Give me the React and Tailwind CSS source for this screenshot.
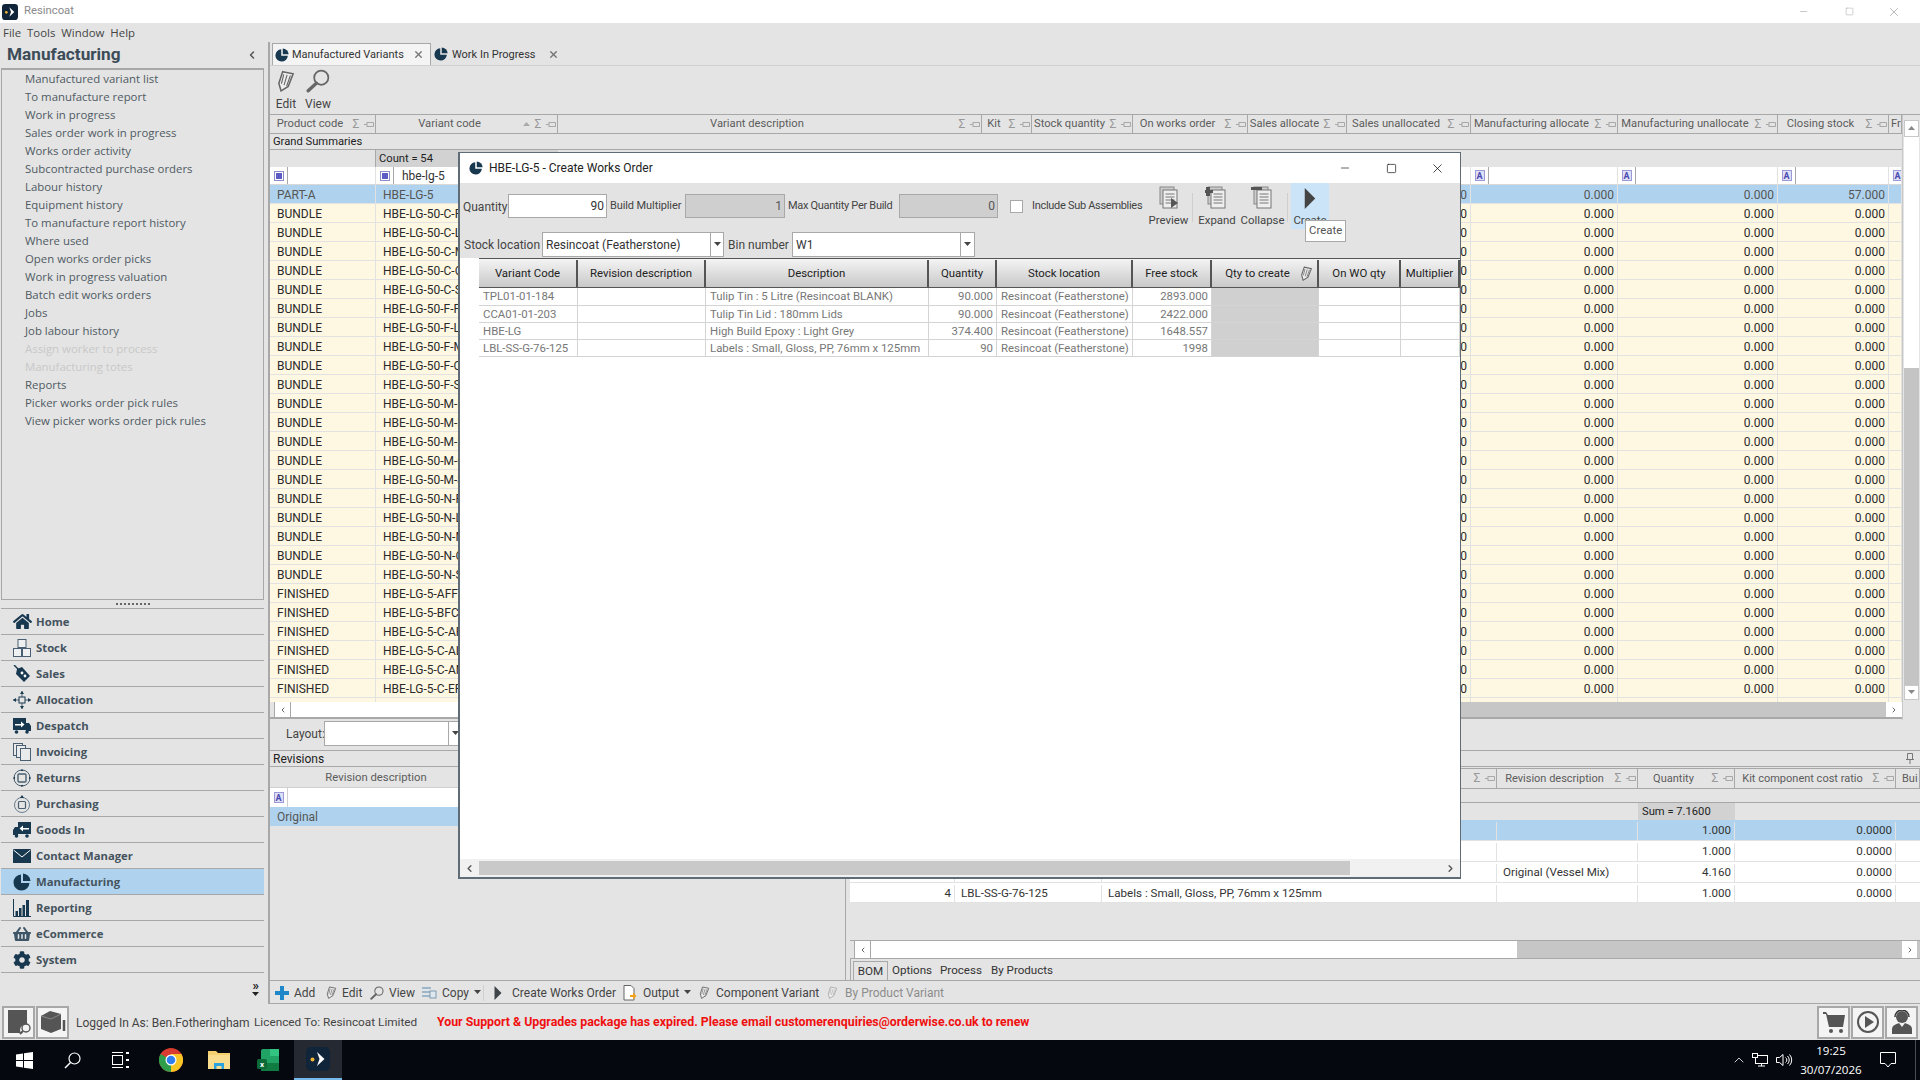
import React from 'react';
import { FaCog, FaShoppingBasket, FaHome } from 'react-icons/fa';
import { ChevronLeft, ChevronRight, ChevronUp, X, Minus, Square } from 'lucide-react';

const NAVY = '#17384f';

const Pie = ({ size = 14 }) => (
  <svg width={size} height={size} viewBox="0 0 18 18" className="shrink-0">
    <path d="M8 1.5 A8 8 0 1 0 16.5 10 L8 10 Z" fill={NAVY} />
    <path d="M10 0.5 A8 8 0 0 1 17.5 8 L10 8 Z" fill={NAVY} />
  </svg>
);

const Pin = () => (
  <svg width="10" height="7" viewBox="0 0 10 7" className="shrink-0">
    <path d="M0 3.5h3M3 1v5M3 1.5h6.5v4H3" fill="none" stroke="#a8a8a8" strokeWidth="1" />
  </svg>
);

const Pencil = ({ size = 16, color = '#666' }) => (
  <svg width={size} height={size} viewBox="0 0 16 20" className="shrink-0">
    <path d="M5 1.5 L14.5 3.5 L10 15 L3.5 19 L1.5 12 Z" fill="#eee" stroke={color} strokeWidth="1.4" />
    <path d="M6 4 L3.8 12.5M9 4.5 L6.2 13.8M12 5 L8.6 14.5" stroke={color} strokeWidth="1" />
  </svg>
);

const Glass = ({ size = 16 }) => (
  <svg width={size} height={size} viewBox="0 0 22 22" className="shrink-0">
    <circle cx="14" cy="8" r="6.5" fill="none" stroke="#666" strokeWidth="1.6" />
    <path d="M9.5 13 L2 20" stroke="#666" strokeWidth="3" strokeLinecap="round" />
  </svg>
);

const Play = ({ w = 8, h = 16, color = '#3f4448' }) => (
  <svg width={w} height={h} viewBox="0 0 8 16" className="shrink-0">
    <path d="M0 0 L8 8 L0 16 Z" fill={color} />
  </svg>
);

const Caret = ({ dir = 'down', color = '#444' }) => (
  <svg width="7" height="5" viewBox="0 0 7 5" className="shrink-0">
    {dir === 'down' ? <path d="M0 0h7L3.5 4z" fill={color} /> : <path d="M0 4h7L3.5 0z" fill={color} />}
  </svg>
);

const FilterA = () => (
  <span className="w-[10px] h-[11px] border border-[#9a9ad8] bg-[#dfe0f5] text-[9px] leading-[10px] text-center text-[#4a4ab0] font-bold shrink-0">A</span>
);

const FilterBox = () => (
  <span className="w-[10px] h-[10px] border border-[#8b8bc9] bg-white flex items-center justify-center shrink-0">
    <span className="w-[6px] h-[6px] bg-[#5c5cc4]" />
  </span>
);

const AppLogo = ({ size = 16 }) => (
  <svg width={size} height={size} viewBox="0 0 24 24" className="shrink-0">
    <rect width="24" height="24" rx="5" fill="#10243a" />
    <circle cx="6.5" cy="12.5" r="2" fill="#f2b632" />
    <path d="M11 5 L18.5 12 L11 19 L13.5 12 Z" fill="#fff" />
  </svg>
);

const navIcon = {
  Home: <FaHome size={19} color={NAVY} />,
  Stock: (
    <svg width="18" height="18" viewBox="0 0 18 18"><g fill="#eef0f2" stroke="#4a6072" strokeWidth="1"><rect x="5" y="0.5" width="8" height="8" /><rect x="0.5" y="9.5" width="8" height="8" /><rect x="9.5" y="9.5" width="8" height="8" /></g></svg>
  ),
  Sales: (
    <svg width="18" height="18" viewBox="0 0 18 18"><path d="M1 0 L6 5" stroke={NAVY} strokeWidth="1.4" /><path d="M4 4 L9 2 L17 11 L11 17 L3 9 Z" fill={NAVY} /><circle cx="9" cy="8" r="1.4" fill="#fff" /><circle cx="12" cy="11" r="1.4" fill="#fff" /></svg>
  ),
  Allocation: (
    <svg width="18" height="18" viewBox="0 0 18 18"><path d="M9 0v18M0 9h18" stroke="#4a6072" strokeWidth="1" /><rect x="6" y="6" width="6" height="6" fill="#e4e4e4" stroke={NAVY} /><path d="M9 0l-2 3h4zM9 18l-2-3h4zM0 9l3-2v4zM18 9l-3-2v4z" fill={NAVY} /></svg>
  ),
  Despatch: (
    <svg width="18" height="18" viewBox="0 0 18 18"><rect x="0" y="1" width="13" height="12" fill={NAVY} /><path d="M13 6h3l2 3v5H13z" fill={NAVY} /><path d="M2 7h6V4.500l3.500 3-3.500 3V8.500H2z" fill="#fff" /><circle cx="3.500" cy="15" r="1.800" fill={NAVY} /><circle cx="14" cy="15" r="1.800" fill={NAVY} /></svg>
  ),
  Invoicing: (
    <svg width="18" height="18" viewBox="0 0 18 18"><g fill="#e8eaec" stroke="#4a6072"><rect x="0.5" y="0.500" width="9" height="12" /><rect x="3.500" y="2.500" width="9" height="12" /><rect x="7.500" y="5.500" width="10" height="12" /></g></svg>
  ),
  Returns: (
    <svg width="18" height="18" viewBox="0 0 18 18"><circle cx="9" cy="9" r="8" fill="none" stroke="#4a6072" /><rect x="5" y="5" width="8" height="8" rx="1" fill="none" stroke="#4a6072" strokeWidth="1.4" /><path d="M9 0l-1.500 2h3zM9 18l-1.500-2h3zM0 9l2-1.500v3zM18 9l-2-1.500v3z" fill={NAVY} /></svg>
  ),
  Purchasing: (
    <svg width="18" height="18" viewBox="0 0 18 18"><circle cx="9" cy="10" r="7.500" fill="none" stroke="#6b7e8d" /><rect x="5.500" y="6.500" width="7" height="7" rx="1" fill="none" stroke="#4a6072" strokeWidth="1.200" /><path d="M9 0l-2 3h4z" fill={NAVY} /></svg>
  ),
  'Goods In': (
    <svg width="18" height="18" viewBox="0 0 18 18"><rect x="5" y="1" width="13" height="12" fill={NAVY} /><path d="M5 6H2L0 9v5h5z" fill={NAVY} /><path d="M16 7h-6V4.500L6.500 7.500l3.500 3V8.500h6z" fill="#fff" /><circle cx="3.500" cy="15" r="1.800" fill={NAVY} /><circle cx="14" cy="15" r="1.800" fill={NAVY} /></svg>
  ),
  'Contact Manager': (
    <svg width="18" height="14" viewBox="0 0 18 14"><rect width="18" height="14" fill={NAVY} /><path d="M0.500 1 L9 8 L17.500 1" fill="none" stroke="#fff" strokeWidth="1" /></svg>
  ),
  Manufacturing: <Pie size={18} />,
  Reporting: (
    <svg width="18" height="18" viewBox="0 0 18 18"><path d="M0.500 0v17.500H18" fill="none" stroke={NAVY} /><g fill={NAVY}><rect x="2.500" y="12" width="2.500" height="5" /><rect x="6" y="9" width="2.500" height="8" /><rect x="9.500" y="6" width="2.500" height="11" /><rect x="13" y="1" width="3" height="16" /></g></svg>
  ),
  eCommerce: <FaShoppingBasket size={18} color="#3e5567" />,
  System: <FaCog size={18} color={NAVY} />,
};

const menuItems = ['Manufactured variant list', 'To manufacture report', 'Work in progress', 'Sales order work in progress', 'Works order activity', 'Subcontracted purchase orders', 'Labour history', 'Equipment history', 'To manufacture report history', 'Where used', 'Open works order picks', 'Work in progress valuation', 'Batch edit works orders', 'Jobs', 'Job labour history', 'Assign worker to process', 'Manufacturing totes', 'Reports', 'Picker works order pick rules', 'View picker works order pick rules'];
const disabledItems = ['Assign worker to process', 'Manufacturing totes'];
const navItems = ['Home', 'Stock', 'Sales', 'Allocation', 'Despatch', 'Invoicing', 'Returns', 'Purchasing', 'Goods In', 'Contact Manager', 'Manufacturing', 'Reporting', 'eCommerce', 'System'];

const columns = [
  { label: 'Product code', w: 'w-[106px]' },
  { label: 'Variant code', w: 'w-[182px]', sorted: true },
  { label: 'Variant description', w: 'w-[424px]' },
  { label: 'Kit', w: 'w-[50px]' },
  { label: 'Stock quantity', w: 'w-[101px]', num: true },
  { label: 'On works order', w: 'w-[115px]', num: true },
  { label: 'Sales allocate', w: 'w-[99px]', num: true },
  { label: 'Sales unallocated', w: 'w-[124px]', num: true },
  { label: 'Manufacturing allocate', w: 'w-[147px]', num: true },
  { label: 'Manufacturing unallocate', w: 'w-[160px]', num: true },
  { label: 'Closing stock', w: 'w-[111px]', num: true },
  { label: 'Fr', w: 'w-[13px]', bare: true },
];

const letters = ['C', 'F', 'M', 'N'];
const ends = ['F', 'L', 'M', 'O', 'S'];
const bundleCodes = letters.flatMap((l) => ends.map((e) => `HBE-LG-50-${l}-${e}`));
const rows = [
  { type: 'PART-A', code: 'HBE-LG-5', closing: '57.000', selected: true },
  ...bundleCodes.map((code) => ({ type: 'BUNDLE', code, closing: '0.000' })),
  ...['AFF', 'BFC', 'C-AF', 'C-AL', 'C-AM', 'C-EF'].map((s) => ({ type: 'FINISHED', code: `HBE-LG-5-${s}`, closing: '0.000' })),
];

const HeaderCell = ({ col }) => (
  <div className={`${col.w} shrink-0 h-full flex items-center border-r border-[#a8a8a8] overflow-hidden`}>
    {col.bare ? (
      <span className="pl-[2px] pt-px">{col.label}</span>
    ) : (
      <>
        <span className="flex-1 pt-px text-center whitespace-nowrap">{col.label}</span>
        {col.sorted && <span className="mr-[2px]"><Caret dir="up" color="#aaa" /></span>}
        <span className="text-[#999] text-[12px] w-[12px] text-center">Σ</span>
        <span className="ml-[2px] mr-px"><Pin /></span>
      </>
    )}
  </div>
);

const GridRow = ({ row }) => (
  <div className={`flex h-[19px] border-b border-[#e2e2e2] ${row.selected ? 'bg-[#afd3ee] text-[#555]' : 'bg-[#fef8e3] text-[#2a2a2a]'}`}>
    {columns.map((col, i) => (
      <div key={col.label} className={`${col.w} shrink-0 border-r border-[#e2e2e2] pt-px flex items-center overflow-hidden whitespace-nowrap ${col.num ? 'justify-end pr-[3px]' : 'pl-[7px]'}`}>
        {i === 0 && row.type}
        {i === 1 && row.code}
        {col.num && (col.label === 'Closing stock' ? row.closing : '0.000')}
      </div>
    ))}
  </div>
);

const TitleBar = () => (
  <div className="h-[23px] bg-white flex items-center">
    <span className="ml-[2px]"><AppLogo /></span>
    <span className="ml-[6px] text-[11.3px] text-[#8a8a8a]">Resincoat</span>
    <div className="ml-auto pr-[3px] flex items-center text-[#888]">
      <span className="w-[48px] flex justify-center"><Minus size={11} strokeWidth={1} /></span>
      <span className="w-[44px] flex justify-center"><Square size={9} strokeWidth={1} /></span>
      <span className="w-[46px] flex justify-center"><X size={14} strokeWidth={1} /></span>
    </div>
  </div>
);

const Sidebar = () => (
  <div className="w-[264px] shrink-0 flex flex-col pl-px">
    <div className="h-[26px] flex items-center pl-[6px] pr-[6px] justify-between">
      <span className="text-[17.2px] font-bold text-[#3c4c58] leading-none">Manufacturing</span>
      <ChevronLeft size={12} strokeWidth={3} color="#555" />
    </div>
    <div className="h-[532px] border-2 border-[#a8a8a8] border-b border-l border-r overflow-hidden">
      {menuItems.map((m) => (
        <div key={m} className={`h-[18px] pl-[23px] flex items-center font-['Open_Sans',sans-serif] text-[11.4px] ${disabledItems.includes(m) ? 'text-[#c8c8c8]' : 'text-[#4f5a63]'}`}>{m}</div>
      ))}
    </div>
    <div className="h-[8px] flex items-center justify-center">
      <span className="w-[34px] border-t-2 border-dotted border-[#666]" />
    </div>
    <div className="border-t border-[#a8a8a8]">
      {navItems.map((n) => (
        <div key={n} className={`h-[26px] flex items-center border-b border-[#a8a8a8] font-['Open_Sans',sans-serif] font-bold text-[11.3px] text-[#45535e] ${n === 'Manufacturing' ? 'bg-[#afd3ee]' : ''}`}>
          <span className="w-[35px] pl-[12px] flex items-center shrink-0">{navIcon[n]}</span>
          <span className="pt-px">{n}</span>
        </div>
      ))}
    </div>
    <div className="flex-1 flex flex-col items-end pr-[5px] pt-[9px]">
      <span className="text-[13px] leading-[8px] font-bold text-[#222]">»</span>
      <span className="mt-[2px]"><Caret color="#222" /></span>
    </div>
  </div>
);

const MainGrid = () => (
  <div className="flex h-[606px] border-t border-[#a8a8a8]">
    <div className="w-[1632px] shrink-0 flex flex-col">
      <div className="flex h-[19px] border-b border-[#a8a8a8] text-[#5c5c5c] text-[11.2px]">
        {columns.map((c) => <HeaderCell key={c.label} col={c} />)}
      </div>
      <div className="h-[16px] border-b border-[#a8a8a8] pl-[3px] pt-[2px] flex items-center text-[#222] text-[11.2px]">Grand Summaries</div>
      <div className="flex h-[17px]">
        <div className="w-[106px] border-r border-[#a8a8a8]" />
        <div className="w-[182px] bg-[#d2d2d2] pl-[3px] pt-px flex items-center text-[#222] text-[11.2px]">Count = 54</div>
      </div>
      <div className="flex h-[18px] bg-white border-b border-[#d8d8d8]">
        {columns.map((col, i) => (
          <div key={col.label} className={`${col.w} shrink-0 flex items-center border-r border-[#e2e2e2] overflow-hidden text-[#333]`}>
            <span className="w-[18px] h-full flex items-center justify-center border-r border-[#a8a8a8] shrink-0">
              {i < 2 ? <FilterBox /> : <FilterA />}
            </span>
            {i === 1 && <span className="pl-[8px]">hbe-lg-5</span>}
          </div>
        ))}
      </div>
      {rows.map((r) => <GridRow key={r.code} row={r} />)}
      <div className="flex h-[4px] bg-[#fef8e3]">
        {columns.map((c) => <div key={c.label} className={`${c.w} shrink-0 border-r border-[#e2e2e2]`} />)}
      </div>
      <div className="h-[17px] flex items-center bg-[#c6c6c6] border-b-2 border-[#a8a8a8]">
        <span className="w-[5px] h-full bg-[#e4e4e4] border-r border-[#a8a8a8]" />
        <span className="w-[16px] h-full bg-white border-r border-[#a8a8a8] flex items-center justify-center"><ChevronLeft size={8} strokeWidth={3} color="#666" /></span>
        <span className="w-[200px] h-full bg-white" />
        <span className="ml-auto w-[16px] h-full bg-white flex items-center justify-center"><ChevronRight size={8} strokeWidth={3} color="#666" /></span>
      </div>
    </div>
    <div className="w-[18px] shrink-0 flex flex-col px-px pt-[5px] bg-[#e4e4e4] border-l border-[#c8c8c8]">
      <div className="h-[17px] bg-white border border-[#c8c8c8] flex items-center justify-center"><Caret dir="up" color="#888" /></div>
      <div className="h-[231px] bg-white" />
      <div className="h-[317px] bg-[#c4c4c4]" />
      <div className="h-[15px] bg-white border border-[#c8c8c8] flex items-center justify-center"><Caret color="#888" /></div>
    </div>
  </div>
);

const bomCols = ['w-[105px]', 'w-[147px]', 'w-[395px]', 'w-[141px]', 'w-[97px]', 'w-[161px]', 'w-[24px]'];
const bomRows = [
  { n: 1, code: 'TPL01-01-184', desc: 'Tulip Tin : 5 Litre (Resincoat BLANK)', rev: '', qty: '1.000', selected: true },
  { n: 2, code: 'CCA01-01-203', desc: 'Tulip Tin Lid : 180mm Lids', rev: '', qty: '1.000' },
  { n: 3, code: 'HBE-LG', desc: 'High Build Epoxy : Light Grey', rev: 'Original (Vessel Mix)', qty: '4.160' },
  { n: 4, code: 'LBL-SS-G-76-125', desc: 'Labels : Small, Gloss, PP, 76mm x 125mm', rev: '', qty: '1.000' },
];

const BomPane = () => (
  <div className="flex-1 flex flex-col ml-[4px] overflow-hidden">
    <div className="flex h-[21px] mt-px border-y border-[#a8a8a8] text-[#5c5c5c] text-[11px]">
      {['', 'Variant code', 'Description', 'Revision description', 'Quantity', 'Kit component cost ratio', 'Bui'].map((label, i) => (
        <div key={i} className={`${bomCols[i]} shrink-0 flex items-center border-r border-[#a8a8a8] overflow-hidden`}>
          <span className={`flex-1 pt-[2px] whitespace-nowrap ${i === 6 ? 'pl-[6px]' : 'text-center'}`}>{label}</span>
          {i > 0 && i < 6 && <span className="text-[#999] text-[12px] w-[12px] text-center">Σ</span>}
          {i > 0 && i < 6 && <span className="ml-[2px] mr-px"><Pin /></span>}
        </div>
      ))}
    </div>
    <div className="h-[14px] border-b border-[#a8a8a8]" />
    <div className="flex h-[17px]">
      <div className="w-[788px]" />
      <div className="w-[97px] bg-[#d2d2d2] pl-[4px] pt-[2px] flex items-center text-[#222] text-[11.2px]">Sum = 7.1600</div>
    </div>
    {bomRows.map((r) => (
      <div key={r.n} className={`flex h-[21px] border-b border-[#e2e2e2] pt-[2px] text-[#333] text-[11.6px] ${r.selected ? 'bg-[#afd3ee]' : 'bg-white'}`}>
        <div className={`${bomCols[0]} shrink-0 flex items-center justify-end pr-[3px] border-r border-[#e2e2e2]`}>{r.n}</div>
        <div className={`${bomCols[1]} shrink-0 flex items-center pl-[6px] border-r border-[#e2e2e2]`}>{r.code}</div>
        <div className={`${bomCols[2]} shrink-0 flex items-center pl-[6px] border-r border-[#e2e2e2]`}>{r.desc}</div>
        <div className={`${bomCols[3]} shrink-0 flex items-center pl-[6px] border-r border-[#e2e2e2]`}>{r.rev}</div>
        <div className={`${bomCols[4]} shrink-0 flex items-center justify-end pr-[3px] border-r border-[#e2e2e2]`}>{r.qty}</div>
        <div className={`${bomCols[5]} shrink-0 flex items-center justify-end pr-[3px] border-r border-[#e2e2e2]`}>0.0000</div>
        <div className={`${bomCols[6]} shrink-0`} />
      </div>
    ))}
    <div className="h-[37px]" />
    <div className="h-[19px] flex bg-[#c6c6c6] border-y border-[#a8a8a8]">
      <span className="w-[5px] bg-[#e4e4e4] border-r border-[#a8a8a8]" />
      <span className="w-[16px] bg-white border-r border-[#a8a8a8] flex items-center justify-center"><ChevronLeft size={8} strokeWidth={3} color="#666" /></span>
      <span className="w-[646px] bg-white" />
      <span className="ml-auto w-[15px] mr-[3px] bg-white flex items-center justify-center"><ChevronRight size={8} strokeWidth={3} color="#666" /></span>
    </div>
    <div className="h-[21px] flex items-end text-[#333] text-[11.6px] border-l border-[#a8a8a8] pl-[2px]">
      <span className="h-[19px] w-[35px] pt-px flex items-center justify-center border border-b-0 border-[#a8a8a8]">BOM</span>
      <span className="ml-[4px] h-[19px] pt-px w-[38px] flex items-center">Options</span>
      <span className="ml-[10px] h-[19px] pt-px w-[41px] flex items-center">Process</span>
      <span className="ml-[10px] h-[19px] pt-px flex items-center">By Products</span>
    </div>
  </div>
);

const BottomToolbar = () => (
  <div className="h-[24px] border-y border-[#a8a8a8] flex items-center pl-[5px] pt-px text-[#444] whitespace-nowrap">
    <svg width="14" height="14" viewBox="0 0 14 14" className="shrink-0"><path d="M5 0h4v5h5v4H9v5H5V9H0V5h5z" fill="#1f88c9" /></svg>
    <span className="ml-[5px] w-[31px]">Add</span>
    <Pencil size={13} />
    <span className="ml-[4px] w-[28px]">Edit</span>
    <Glass size={14} />
    <span className="ml-[5px] w-[33px]">View</span>
    <svg width="15" height="12" viewBox="0 0 15 12" className="shrink-0"><g fill="#9cb6cc"><rect y="0" width="9" height="2" /><rect y="4" width="9" height="2" /><rect y="8" width="9" height="2" /></g><rect x="8" y="4" width="6" height="7" fill="#dfe8ee" stroke="#7e9ab0" /></svg>
    <span className="ml-[5px] w-[32px]">Copy</span>
    <Caret />
    <span className="ml-[2px] h-[16px] border-l border-[#cfcfcf]" />
    <span className="ml-[10px]"><Play w={8} h={14} /></span>
    <span className="ml-[10px] w-[111px]">Create Works Order</span>
    <svg width="14" height="16" viewBox="0 0 14 16" className="shrink-0"><path d="M1 0.500h7l3 3V15H1z" fill="#fff" stroke="#666" /><path d="M7 10h3V7.500l3.500 3.500-3.500 3.500V12H7z" fill="#f2a11d" /></svg>
    <span className="ml-[6px] w-[41px]">Output</span>
    <Caret />
    <span className="ml-[7px]"><Pencil size={13} /></span>
    <span className="ml-[5px] w-[110px]">Component Variant</span>
    <Pencil size={13} color="#aaa" />
    <span className="ml-[6px] text-[#8c8c8c]">By Product Variant</span>
  </div>
);

const MainPane = () => (
  <div className="flex-1 min-w-0 flex flex-col border-l-2 border-[#a8a8a8]">
    <div className="h-[24px] flex items-end pl-[2px] border-b border-[#d0d0d0] whitespace-nowrap text-[11px]">
      <div className="w-[159px] h-[22px] bg-[#f4f4f4] border border-b-0 border-[#a8a8a8] flex items-center pl-[2px] text-[#333]">
        <Pie />
        <span className="ml-[3px] pt-[2px]">Manufactured Variants</span>
        <X size={11} strokeWidth={3} color="#777" className="ml-auto mr-[6px]" />
      </div>
      <div className="h-[22px] flex items-center pl-[3px] text-[#333]">
        <Pie />
        <span className="ml-[4px] w-[90px] pt-[2px]">Work In Progress</span>
        <X size={11} strokeWidth={3} color="#777" className="ml-[6px]" />
      </div>
    </div>
    <div className="h-[48px] flex text-[#444]">
      <div className="w-[32px] flex flex-col items-center pt-[4px]">
        <Pencil size={22} />
        <span className="mt-[3px]">Edit</span>
      </div>
      <div className="w-[28px] ml-[2px] flex flex-col items-center pt-[3px]">
        <Glass size={24} />
        <span className="mt-[2px]">View</span>
      </div>
    </div>
    <MainGrid />
    <div className="h-[27px] flex items-center pl-[16px] text-[#444]">
      <span className="w-[38px]">Layout:</span>
      <span className="w-[125px] h-[25px] bg-white border border-[#a8a8a8]" />
      <span className="w-[14px] h-[25px] bg-white border-r border-y border-[#a8a8a8] flex items-center justify-center"><Caret /></span>
    </div>
    <div className="h-[3px]" />
    <div className="h-[17px] border-y border-[#a8a8a8] pl-[3px] flex items-center justify-between pr-[6px] text-[#222]">
      Revisions
      <svg width="8" height="11" viewBox="0 0 8 11"><path d="M1.500 0.500h5v6h-5zM0 6.500h8M4 6.500V11" fill="none" stroke="#777" /></svg>
    </div>
    <div className="h-[213px] flex">
      <div className="w-[576px] shrink-0 border-r border-[#a8a8a8] mt-px">
        <div className="h-[20px] flex items-center pt-[2px] text-[#5c5c5c] text-[11.3px] border-b border-[#d0d0d0]">
          <span className="w-[212px] text-center">Revision description</span>
        </div>
        <div className="h-[19px] bg-white flex items-center">
          <span className="w-[18px] h-full flex items-center justify-center border-r border-[#d0d0d0]"><FilterA /></span>
        </div>
        <div className="h-[19px] bg-[#afd3ee] pl-[7px] flex items-center text-[#555]">Original</div>
      </div>
      <BomPane />
    </div>
    <BottomToolbar />
  </div>
);

const StatusBar = () => (
  <div className="h-[36px] flex items-center pl-[2px] pr-[2px] whitespace-nowrap">
    <div className="w-[33px] h-[33px] border-2 border-[#a8a8a8] bg-[#f4f4f4] flex items-center justify-center">
      <svg width="26" height="26" viewBox="0 0 26 26"><path d="M2 1h19v14a6 6 0 0 0-6 9H2z" fill="#555" /><circle cx="20" cy="19" r="4" fill="none" stroke="#555" strokeWidth="1.400" /><path d="M17 22l-3 3" stroke="#555" strokeWidth="2" /></svg>
    </div>
    <div className="w-[33px] h-[33px] ml-px border-2 border-[#a8a8a8] bg-[#f4f4f4] flex items-center justify-center">
      <svg width="26" height="26" viewBox="0 0 26 26"><path d="M1 7l9-5 11 3v15l-10 4-10-4z" fill="#555" /><path d="M1 7l10 3 10-5" fill="none" stroke="#888" /><path d="M24 11v11" stroke="#555" strokeWidth="2.500" /></svg>
    </div>
    <span className="ml-[7px] w-[178px] pt-px text-[#444]">Logged In As: Ben.Fotheringham</span>
    <span className="w-[183px] pt-px text-[11.8px] text-[#444]">Licenced To: Resincoat Limited</span>
    <span className="font-bold pt-px text-[12.33px] text-[#f01010]">Your Support &amp; Upgrades package has expired. Please email customerenquiries@orderwise.co.uk to renew</span>
    <div className="ml-auto flex gap-px">
      <div className="w-[33px] h-[33px] border-2 border-[#a8a8a8] bg-[#f4f4f4] flex items-center justify-center">
        <svg width="24" height="24" viewBox="0 0 24 24"><path d="M1 2h3l2 3h17l-2 12H7L4 4H1z" fill="#555" /><circle cx="9" cy="21" r="2" fill="#555" /><circle cx="19" cy="21" r="2" fill="#555" /></svg>
      </div>
      <div className="w-[33px] h-[33px] border-2 border-[#a8a8a8] bg-[#f4f4f4] flex items-center justify-center">
        <svg width="24" height="24" viewBox="0 0 24 24"><circle cx="12" cy="12" r="10" fill="none" stroke="#555" strokeWidth="2" /><path d="M9 6l9 6-9 6z" fill="#555" /></svg>
      </div>
      <div className="w-[33px] h-[33px] border-2 border-[#a8a8a8] bg-[#f4f4f4] flex items-center justify-center">
        <svg width="22" height="24" viewBox="0 0 22 24"><circle cx="11" cy="7" r="6" fill="#555" /><path d="M4 7a7 7 0 0 1 14 0" fill="none" stroke="#333" strokeWidth="1.500" /><path d="M1 24v-5c0-4 5-5 7-6l3 4 3-4c2 1 7 2 7 6v5z" fill="#555" /></svg>
      </div>
    </div>
  </div>
);

const Taskbar = () => (
  <div className="h-[40px] bg-[#05080f] flex items-center text-white">
    <div className="w-[48px] flex justify-center">
      <svg width="17" height="17" viewBox="0 0 17 17"><path d="M0 2.400L7 1.400V8H0zM8 1.300L17 0V8H8zM0 9h7v6.600L0 14.600zM8 9h9v8l-9-1.300z" fill="#fff" /></svg>
    </div>
    <div className="w-[48px] flex justify-center">
      <svg width="17" height="17" viewBox="0 0 17 17"><circle cx="10.500" cy="6.500" r="5.500" fill="none" stroke="#fff" strokeWidth="1.200" /><path d="M6.500 10.500L1 16" stroke="#fff" strokeWidth="1.400" /></svg>
    </div>
    <div className="w-[48px] flex justify-center">
      <svg width="17" height="16" viewBox="0 0 17 16"><path d="M0 0.500h11M0 15.500h11" stroke="#fff" /><rect x="0.500" y="3.500" width="10" height="9" fill="none" stroke="#fff" /><path d="M14 0h3v2h-3zM14 7h3v2h-3zM14 14h3v2h-3z" fill="#fff" /></svg>
    </div>
    <div className="w-[48px] ml-[3px] flex justify-center">
      <svg width="24" height="24" viewBox="0 0 24 24">
        <circle cx="12" cy="12" r="12" fill="#d93b30" />
        <path d="M12 12 L1.600 6 A12 12 0 0 0 12 24 Z" fill="#2e9e4a" />
        <path d="M12 12 L12 24 A12 12 0 0 0 22.400 6 L12 6 Z" fill="#f7c624" />
        <circle cx="12" cy="12" r="5.500" fill="#fff" />
        <circle cx="12" cy="12" r="4.300" fill="#2f7ff0" />
      </svg>
    </div>
    <div className="w-[48px] flex justify-center">
      <svg width="22" height="18" viewBox="0 0 22 18"><path d="M0 0h8l2 2h12v16H0z" fill="#f3cf6d" /><rect y="4" width="22" height="14" fill="#f7dd8d" /><path d="M6 18v-6h10v6h-2.500v-3h-5v3z" fill="#2aa3df" /></svg>
    </div>
    <div className="w-[48px] ml-px flex justify-center">
      <svg width="22" height="22" viewBox="0 0 22 22"><rect x="4" y="0" width="18" height="22" rx="2" fill="#21a366" /><rect x="13" y="0" width="9" height="7" fill="#33c481" /><rect x="4" y="14" width="18" height="8" fill="#107c41" /><rect y="10" width="10" height="10" rx="1.500" fill="#0c6a38" /><text x="5" y="18" textAnchor="middle" fill="#fff" fontSize="8" fontWeight="700">x</text></svg>
    </div>
    <div className="w-[48px] h-full ml-[2px] bg-[#252a32] border-b-2 border-[#76b9ed] flex items-center justify-center">
      <AppLogo size={24} />
    </div>
    <div className="ml-auto flex items-center">
      <ChevronUp size={16} strokeWidth={1.200} />
      <svg width="16" height="14" viewBox="0 0 16 14" className="ml-[5px]"><rect x="3.500" y="2.500" width="12" height="8" fill="none" stroke="#fff" /><path d="M9.500 10.500V13M6 13h7" stroke="#fff" /><rect x="0.500" y="0.500" width="5" height="4" fill="#05080f" stroke="#fff" /></svg>
      <svg width="17" height="14" viewBox="0 0 17 14" className="ml-[8px]"><path d="M0.500 4.500h3L7 1.500v11L3.500 9.500h-3z" fill="none" stroke="#fff" /><path d="M9.500 4.500a3 3 0 0 1 0 5M11.500 3a5.500 5.500 0 0 1 0 8M13.500 1.500a8 8 0 0 1 0 11" fill="none" stroke="#fff" /></svg>
      <div className="w-[68px] ml-[4px] mr-[15px] flex flex-col items-center text-[11.6px] leading-[19px] font-['Open_Sans',sans-serif]">
        <span>19:25</span>
        <span>30/07/2026</span>
      </div>
      <svg width="16" height="16" viewBox="0 0 16 16"><path d="M0.500 0.500h15v11h-4.500L8 15l-3-3.500H0.500z" fill="none" stroke="#fff" /></svg>
      <span className="ml-[19px] mr-[4px] h-[40px] border-l border-[#4a4d52]" />
    </div>
  </div>
);

const modalCols = [
  { label: 'Variant Code', w: 'w-[99px]', key: 'code' },
  { label: 'Revision description', w: 'w-[128px]', key: 'rev' },
  { label: 'Description', w: 'w-[223px]', key: 'desc' },
  { label: 'Quantity', w: 'w-[68px]', key: 'qty', right: true },
  { label: 'Stock location', w: 'w-[136px]', key: 'loc' },
  { label: 'Free stock', w: 'w-[79px]', key: 'free', right: true },
  { label: 'Qty to create', w: 'w-[107px]', key: 'create', edit: true },
  { label: 'On WO qty', w: 'w-[82px]', key: 'wo' },
  { label: 'Multiplier', w: 'w-[59px]', key: 'mult' },
];
const modalRows = [
  { code: 'TPL01-01-184', desc: 'Tulip Tin : 5 Litre (Resincoat BLANK)', qty: '90.000', loc: 'Resincoat (Featherstone)', free: '2893.000', h: 'h-[18px]' },
  { code: 'CCA01-01-203', desc: 'Tulip Tin Lid : 180mm Lids', qty: '90.000', loc: 'Resincoat (Featherstone)', free: '2422.000', h: 'h-[17px]' },
  { code: 'HBE-LG', desc: 'High Build Epoxy : Light Grey', qty: '374.400', loc: 'Resincoat (Featherstone)', free: '1648.557', h: 'h-[17px]' },
  { code: 'LBL-SS-G-76-125', desc: 'Labels : Small, Gloss, PP, 76mm x 125mm', qty: '90', loc: 'Resincoat (Featherstone)', free: '1998', h: 'h-[17px]' },
];

const DocIcon = ({ children }) => (
  <svg width="24" height="24" viewBox="0 0 24 24">
    <rect x="3" y="1" width="14" height="17" fill="#ccc" stroke="#888" />
    <rect x="6" y="4" width="14" height="18" fill="#eee" stroke="#777" />
    <path d="M8.500 8h9M8.500 11h9M8.500 14h9M8.500 17h9" stroke="#777" />
    {children}
  </svg>
);

const Modal = () => (
  <div className="absolute left-[458px] top-[152px] w-[1003px] h-[727px] bg-white border-2 border-[#5f6b75] border-t border-r flex flex-col overflow-hidden">
    <div className="h-[30px] shrink-0 flex items-center pl-[9px] text-[#222]">
      <Pie />
      <span className="ml-[6px] text-[12px]">HBE-LG-5 - Create Works Order</span>
      <div className="ml-auto flex items-center text-[#111]">
        <span className="w-[46px] flex justify-center"><Minus size={12} strokeWidth={1.300} /></span>
        <span className="w-[46px] flex justify-center"><Square size={11} strokeWidth={1.500} /></span>
        <span className="w-[46px] flex justify-center"><X size={15} strokeWidth={1.200} /></span>
      </div>
    </div>
    <div className="h-[75px] shrink-0 bg-[#e3e3e3] flex flex-col text-[#444] text-[11.4px] relative">
      <div className="h-[49px] flex pl-[3px]">
        <div className="flex items-center h-[24px] mt-[11px]">
          <span className="w-[45px] text-[12px] pt-px">Quantity</span>
          <span className="w-[99px] h-[24px] bg-white border border-[#a8a8a8] flex items-center justify-end pr-[2px] text-[#333] text-[12px]">90</span>
          <span className="ml-[3px] w-[75px] whitespace-nowrap text-[11px] tracking-[-0.1px]">Build Multiplier</span>
          <span className="w-[100px] h-[24px] bg-[#cfcfcf] border border-[#a8a8a8] flex items-center justify-end pr-[2px] text-[#555] text-[12px]">1</span>
          <span className="ml-[3px] w-[111px] whitespace-nowrap text-[11px] tracking-[-0.3px]">Max Quantity Per Build</span>
          <span className="w-[99px] h-[24px] bg-[#cfcfcf] border border-[#a8a8a8] flex items-center justify-end pr-[2px] text-[#555] text-[12px]">0</span>
          <span className="ml-[12px] w-[13px] h-[13px] bg-white border border-[#a8a8a8]" />
          <span className="ml-[9px] w-[111px] pt-px whitespace-nowrap text-[11px] tracking-[-0.3px]">Include Sub Assemblies</span>
        </div>
        <div className="w-[37px] ml-[7px] flex flex-col items-center pt-[3px]">
          <DocIcon><path d="M14 12l7 5-7 5z" fill="#555" /></DocIcon>
          <span className="mt-[2px]">Preview</span>
        </div>
        <span className="ml-[5px] my-[10px] border-l border-[#cfcfcf]" />
        <div className="w-[34px] ml-[7px] flex flex-col items-center pt-[3px]">
          <DocIcon><path d="M1 1h4v3h3v3H5v3H1V7H0V4h1z" fill="#555" /></DocIcon>
          <span className="mt-[2px]">Expand</span>
        </div>
        <div className="w-[41px] ml-[8px] flex flex-col items-center pt-[3px]">
          <DocIcon><rect x="0" y="1" width="11" height="3" fill="#555" /></DocIcon>
          <span className="mt-[2px]">Collapse</span>
        </div>
        <span className="ml-[4px] my-[10px] border-l border-[#cfcfcf]" />
        <div className="w-[38px] h-[46px] ml-[3px] bg-[#cce4f7] flex flex-col items-center pt-[5px]">
          <Play w={12} h={21} color="#444" />
          <span className="mt-[3px]">Create</span>
        </div>
      </div>
      <div className="flex items-center h-[25px] pl-[4px] text-[12px]">
        <span className="w-[78px]">Stock location</span>
        <span className="w-[169px] h-[25px] bg-white border border-[#a8a8a8] flex items-center pl-[3px] text-[#333]">Resincoat (Featherstone)</span>
        <span className="w-[13px] h-[25px] bg-white border-y border-r border-[#a8a8a8] flex items-center justify-center"><Caret /></span>
        <span className="ml-[4px] w-[64px]">Bin number</span>
        <span className="w-[169px] h-[25px] bg-white border border-[#a8a8a8] flex items-center pl-[3px] text-[#333]">W1</span>
        <span className="w-[14px] h-[25px] bg-white border-y border-r border-[#a8a8a8] flex items-center justify-center"><Caret /></span>
      </div>
    </div>
    <div className="flex-1 pl-[19px] overflow-hidden text-[11.4px]">
      <div className="flex h-[30px] border-y border-[#555] pt-px bg-linear-to-b from-[#f4f4f4] to-[#c9c9c9] text-[#222] w-[1000px]">
        {modalCols.map((c) => (
          <div key={c.key} className={`${c.w} shrink-0 border-r-2 border-[#555] flex items-center justify-center relative whitespace-nowrap overflow-hidden`}>
            <span className={c.edit ? 'pr-[14px]' : ''}>{c.label}</span>
            {c.edit && <span className="absolute right-[3px] top-[6px]"><Pencil size={15} /></span>}
          </div>
        ))}
      </div>
      {modalRows.map((r) => (
        <div key={r.code} className={`flex ${r.h} w-[1000px] border-b border-[#d4d4d4] text-[#777]`}>
          {modalCols.map((c) => (
            <div key={c.key} className={`${c.w} shrink-0 flex items-center pt-px border-r border-[#d4d4d4] whitespace-nowrap overflow-hidden ${c.right ? 'justify-end pr-[3px]' : 'pl-[4px]'} ${c.key === 'create' ? 'bg-[#d0d0d0]' : ''}`}>
              {r[c.key]}
            </div>
          ))}
        </div>
      ))}
    </div>
    <div className="h-[18px] shrink-0 flex items-center bg-[#f1f1f1]">
      <span className="w-[19px] flex justify-center"><ChevronLeft size={11} strokeWidth={3} color="#555" /></span>
      <span className="w-[871px] h-[14px] bg-[#c9c9c9]" />
      <span className="ml-auto w-[19px] flex justify-center"><ChevronRight size={11} strokeWidth={3} color="#555" /></span>
    </div>
    <div className="absolute left-[845px] top-[67px] h-[22px] px-[3px] bg-white border border-[#a8a8a8] flex items-center text-[11.4px] text-[#555]">Create</div>
  </div>
);

export default function App() {
  return (
    <div className="relative w-[1920px] h-[1080px] overflow-hidden bg-[#e4e4e4] flex flex-col font-['Roboto',Arial,sans-serif] text-[12px]">
      <TitleBar />
      <div className="h-[19px] flex items-center pl-[3px] gap-[6px] text-[#444] text-[11.4px] font-['Open_Sans',sans-serif]">
        <span>File</span><span>Tools</span><span>Window</span><span>Help</span>
      </div>
      <div className="h-[962px] flex">
        <Sidebar />
        <div className="w-[4px] shrink-0" />
        <MainPane />
      </div>
      <StatusBar />
      <Taskbar />
      <Modal />
    </div>
  );
}
